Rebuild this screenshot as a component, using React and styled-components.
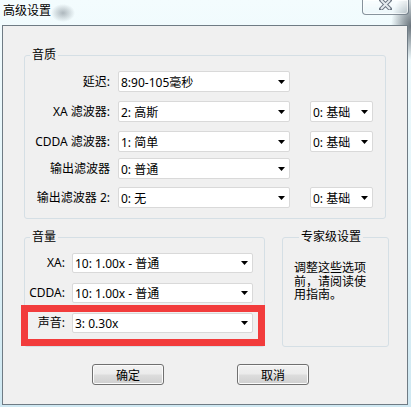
import React from "react";
import styled, { createGlobalStyle } from "styled-components";

const GlobalStyle = createGlobalStyle`
  html, body {
    margin: 0;
    padding: 0;
  }
  body {
    font-family: "Noto Sans", "Noto Sans CJK SC", sans-serif;
    font-size: 12px;
    color: #000;
  }
`;

const Shell = styled.div`
  width: 411px;
  height: 407px;
  display: flex;
  flex-direction: column;
  overflow: hidden;
  background:
    radial-gradient(ellipse 20px 34px at 100% 26px, rgba(70, 80, 90, 0.8), rgba(70, 80, 90, 0)),
    radial-gradient(ellipse 12px 9px at 63px 13px, rgba(90, 100, 110, 0.45), rgba(90, 100, 110, 0)),
    linear-gradient(180deg, #f3fcfe 0%, #e4f5fa 45%, #cfe8f2 100%);
`;

const TitleBar = styled.div`
  height: 25px;
  flex: none;
  display: flex;
  align-items: flex-start;
  justify-content: space-between;
  padding: 0 2px 0 3px;
  box-sizing: border-box;
`;

const Title = styled.span`
  margin-top: 3px;
  line-height: 16px;
  text-shadow: 0 0 6px rgba(255, 255, 255, 0.95);
`;

const CloseButton = styled.div`
  width: 47px;
  height: 15px;
  box-sizing: border-box;
  border: 1px solid rgba(60, 75, 90, 0.6);
  border-top: none;
  border-radius: 0 0 4px 4px;
  background: linear-gradient(180deg, rgba(255, 255, 255, 0.55), rgba(225, 238, 244, 0.35));
  box-shadow: inset 0 0 0 1px rgba(255, 255, 255, 0.6);
  display: flex;
  justify-content: center;
  align-items: flex-start;
`;

const Frame = styled.div`
  flex: 1;
  margin: 0 3px 2px 2px;
  border: 1px solid #6f7b84;
  background: #f0f0f0;
  padding: 21px 0 0 21px;
  display: flex;
  flex-direction: column;
`;

const Group = styled.fieldset`
  margin: 0;
  padding: ${(p) => p.$pad};
  width: ${(p) => p.$w}px;
  box-sizing: border-box;
  min-width: 0;
  border: 1px solid #d5dfe5;
  border-radius: 3px;
`;

const Caption = styled.legend`
  margin-left: 5px;
  padding: 0 2px;
  line-height: 16px;
`;

const FieldRow = styled.div`
  display: flex;
  align-items: center;
  height: ${(p) => p.$h}px;
  margin-top: ${(p) => p.$mt || 0}px;
`;

const Highlight = styled.div`
  display: flex;
  align-items: flex-start;
  width: 230px;
  height: 27px;
  box-sizing: border-box;
  padding-top: 1px;
  margin: 9px 0 0 3px;
  outline: 7px solid #f23c3c;
`;

const Label = styled.span`
  width: ${(p) => p.$w}px;
  flex: none;
  margin-right: ${(p) => p.$gap}px;
  text-align: right;
  white-space: nowrap;
  line-height: 20px;
`;

const Combo = styled.div`
  width: ${(p) => p.$w}px;
  height: ${(p) => p.$h}px;
  margin-left: ${(p) => p.$ml || 0}px;
  flex: none;
  box-sizing: border-box;
  display: flex;
  align-items: center;
  padding-left: 2px;
  background: #fff;
  border: 1px solid #d9d9d9;
  border-radius: 2px;
`;

const ComboText = styled.span`
  flex: 1;
  white-space: nowrap;
  overflow: hidden;
`;

const ArrowBox = styled.span`
  width: 15px;
  flex: none;
  display: flex;
  justify-content: center;
`;

const LowerRow = styled.div`
  display: flex;
  align-items: stretch;
  gap: 17px;
  margin-top: 10px;
`;

const Note = styled.div`
  width: 73px;
  line-height: 13.5px;
`;

const ButtonRow = styled.div`
  display: flex;
  gap: 73px;
  margin-top: 17px;
  padding-left: 68px;
`;

const Button = styled.button`
  width: 72px;
  height: 21px;
  padding: 0;
  font: inherit;
  color: #000;
  border: 1px solid #707070;
  border-radius: 3px;
  background: linear-gradient(180deg, #f2f2f2 0%, #ebebeb 48%, #dddddd 52%, #cfcfcf 100%);
  box-shadow: inset 0 0 0 1px #fbfbfb;
`;

const Arrow = () => (
  <ArrowBox>
    <svg width="7" height="4" viewBox="0 0 7 4">
      <polygon points="0,0 7,0 3.5,4" fill="#000" />
    </svg>
  </ArrowBox>
);

const Select = ({ w, h = 21, ml, value }) => (
  <Combo $w={w} $h={h} $ml={ml}>
    <ComboText>{value}</ComboText>
    <Arrow />
  </Combo>
);

const qualityRows = [
  { label: "延迟:", value: "8:90-105毫秒", mt: 0 },
  { label: "XA 滤波器:", value: "2: 高斯", extra: "0: 基础", mt: 9 },
  { label: "CDDA 滤波器:", value: "1: 简单", extra: "0: 基础", mt: 9 },
  { label: "输出滤波器", value: "0: 普通", mt: 6 },
  { label: "输出滤波器 2:", value: "0: 无", extra: "0: 基础", mt: 8 },
];

export default function App() {
  return (
    <>
      <GlobalStyle />
      <Shell lang="zh-CN">
        <TitleBar>
          <Title>高级设置</Title>
          <CloseButton>
            <svg width="13" height="10" viewBox="0 0 13 10">
              <path d="M2 0 L11 9 M11 0 L2 9" stroke="#6a7480" strokeWidth="4" strokeLinecap="square" />
              <path d="M2 0 L11 9 M11 0 L2 9" stroke="#e4eaee" strokeWidth="2" />
            </svg>
          </CloseButton>
        </TitleBar>

        <Frame>
          <Group $w={362} $pad="8px 0 10px 0">
            <Caption>音质</Caption>
            {qualityRows.map((r) => (
              <FieldRow key={r.label} $h={21} $mt={r.mt}>
                <Label $w={85} $gap={8}>{r.label}</Label>
                <Select w={172} value={r.value} />
                {r.extra && <Select w={63} ml={20} value={r.extra} />}
              </FieldRow>
            ))}
          </Group>

          <LowerRow>
            <Group $w={241} $pad="8px 0 7px 0">
              <Caption>音量</Caption>
              <FieldRow $h={20}>
                <Label $w={40} $gap={7}>XA:</Label>
                <Select w={181} h={20} value="10: 1.00x - 普通" />
              </FieldRow>
              <FieldRow $h={20} $mt={10}>
                <Label $w={40} $gap={7}>CDDA:</Label>
                <Select w={181} h={20} value="10: 1.00x - 普通" />
              </FieldRow>
              <Highlight>
                <Label $w={37} $gap={7}>声音:</Label>
                <Select w={181} h={20} value="3: 0.30x" />
              </Highlight>
            </Group>

            <Group $w={107} $pad="16px 0 0 11px">
              <Caption>专家级设置</Caption>
              <Note>调整这些选项前，请阅读使用指南。</Note>
            </Group>
          </LowerRow>

          <ButtonRow>
            <Button>确定</Button>
            <Button>取消</Button>
          </ButtonRow>
        </Frame>
      </Shell>
    </>
  );
}
